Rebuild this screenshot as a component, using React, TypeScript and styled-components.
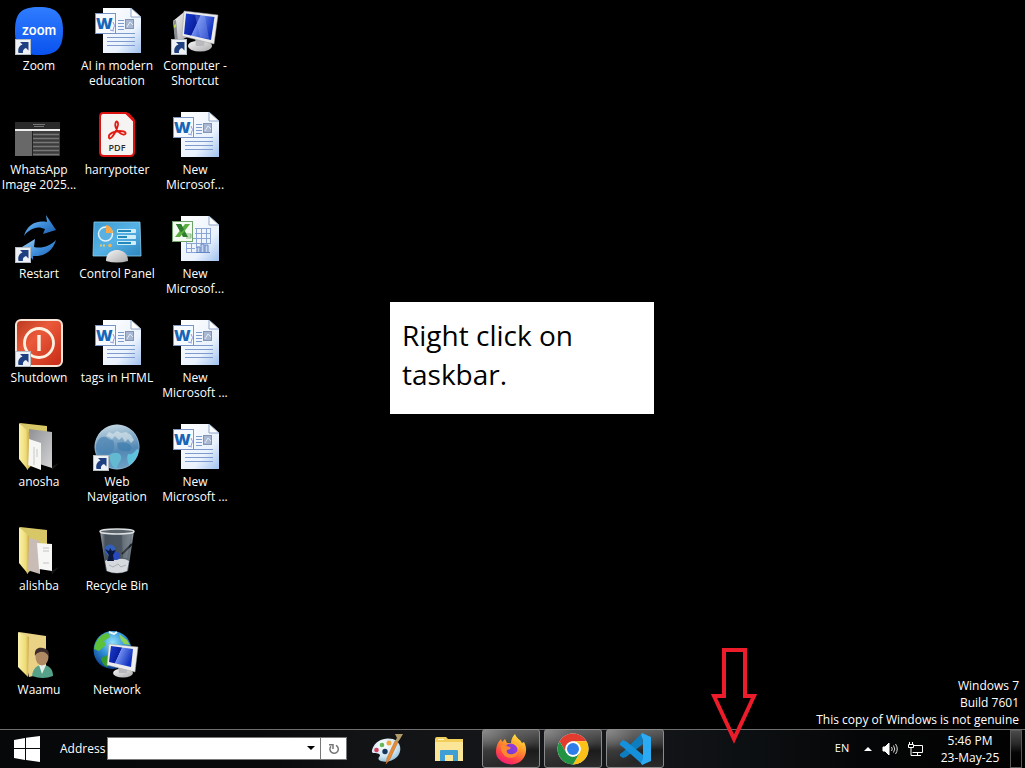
import React from "react";
import styled, { createGlobalStyle } from "styled-components";

const GlobalStyle = createGlobalStyle`
  * { box-sizing: border-box; }
  body {
    margin: 0;
    background: #000;
    color: #fff;
    font-family: "Open Sans", "Noto Sans", sans-serif;
    font-size: 12px;
  }
`;

const Screen = styled.div`
  position: relative;
  display: flex;
  flex-direction: column;
  min-height: 100vh;
  overflow: hidden;
`;

const Desktop = styled.main`
  position: relative;
  flex: 1;
`;

const IconGrid = styled.div`
  display: grid;
  grid-auto-flow: column;
  grid-template-rows: repeat(7, 104px);
  grid-auto-columns: 78px;
`;

const Shortcut = styled.a`
  display: flex;
  flex-direction: column;
  align-items: center;
  gap: 3px;
  padding-top: 7px;
  color: #fff;
  text-decoration: none;
`;

const ShortcutLabel = styled.span`
  font-size: 12px;
  line-height: 15px;
  text-align: center;
  white-space: pre;
`;

const Note = styled.p`
  position: absolute;
  left: 390px;
  top: 302px;
  width: 264px;
  height: 112px;
  margin: 0;
  padding: 14px 12px;
  background: #fff;
  color: #000;
  font-size: 28px;
  line-height: 39px;
`;

const Pointer = styled.svg`
  position: absolute;
  left: 711px;
  bottom: 24px;
  z-index: 2;
`;

const Watermark = styled.div`
  position: absolute;
  right: 6px;
  bottom: 1px;
  text-align: right;
  font-size: 12px;
  line-height: 17px;
`;

const Taskbar = styled.footer`
  display: flex;
  align-items: stretch;
  height: 39px;
  padding-right: 3px;
  border-top: 1px solid #6e6e6e;
  background: linear-gradient(90deg, #060809 0%, #08090a 25%, #121315 35%, #15171a 60%, #0c0f11 74%, #050607 84%, #020202 100%);
`;

const PlainButton = styled.button`
  display: flex;
  align-items: center;
  justify-content: center;
  padding: 0;
  border: 0;
  background: none;
  color: inherit;
  font: inherit;
`;

const StartButton = styled(PlainButton)`
  width: 54px;
`;

const AddressBar = styled.div`
  display: flex;
  align-items: center;
  gap: 2px;
  margin-left: 6px;
  padding-bottom: 2px;
`;

const AddressField = styled.div`
  display: flex;
  width: 240px;
  height: 23px;
  border: 1px solid #777;
  background: #fff;
`;

const AddressInput = styled.input`
  flex: 1;
  min-width: 0;
  padding: 0 4px;
  border: 0;
  outline: 0;
  background: #fff;
  font: inherit;
`;

const FieldButton = styled(PlainButton)<{ $divided?: boolean }>`
  width: ${(p) => (p.$divided ? 26 : 18)}px;
  border-left: ${(p) => (p.$divided ? "1px solid #777" : "0")};
`;

const AppStrip = styled.nav`
  display: flex;
  gap: 4px;
  margin-left: 11px;
`;

const AppButton = styled(PlainButton)<{ $open?: boolean }>`
  width: 58px;
  margin-top: ${(p) => (p.$open ? -1 : 0)}px;
  border: ${(p) => (p.$open ? "1px solid #8b8b8b" : "0")};
  border-radius: 3px;
  background: ${(p) =>
    p.$open
      ? "radial-gradient(ellipse at 0% 0%, #8a8a8a 0%, rgba(110,110,110,.45) 35%, transparent 70%), linear-gradient(180deg, #5c5c5c 0%, #3a3a3a 35%, #1b1b1b 55%, #2b2b2b 100%)"
      : "none"};
`;

const Tray = styled.div`
  display: flex;
  align-items: center;
  margin-left: auto;
`;

const Language = styled(PlainButton)`
  width: 20px;
  margin: 0 12px 4px 0;
  font-size: 11px;
`;

const TrayIcons = styled.div`
  display: flex;
  align-items: center;
  gap: 10px;
`;

const Clock = styled.time`
  width: 64px;
  margin: 0 8px 0 15px;
  text-align: center;
  font-size: 12px;
  line-height: 17px;
`;

const ShowDesktop = styled(PlainButton)`
  align-self: stretch;
  width: 12px;
  border: 1px solid #5a5a5a;
  background: linear-gradient(180deg, #4a4a4a 0%, #2a2a2a 35%, #050505 60%, #000 100%);
`;

const Defs = () => (
  <svg width="0" height="0" style={{ position: "absolute" }} aria-hidden="true">
    <defs>
      <linearGradient id="page" x1="0" y1="0" x2="1" y2="1">
        <stop offset="0" stopColor="#ffffff" />
        <stop offset=".65" stopColor="#eaf2fd" />
        <stop offset="1" stopColor="#9fc0ee" />
      </linearGradient>
      <linearGradient id="screen" x1="0" y1="0" x2="1" y2=".4">
        <stop offset="0" stopColor="#1c3fd0" />
        <stop offset=".48" stopColor="#0a1fa0" />
        <stop offset=".5" stopColor="#6f8dee" />
        <stop offset="1" stopColor="#1233c0" />
      </linearGradient>
      <linearGradient id="metal" x1="0" y1="0" x2="1" y2="1">
        <stop offset="0" stopColor="#f7f7f7" />
        <stop offset="1" stopColor="#a9a9ad" />
      </linearGradient>
      <linearGradient id="zoomBlue" x1="0" y1="0" x2="0" y2="1">
        <stop offset="0" stopColor="#2f7dff" />
        <stop offset="1" stopColor="#0a52ee" />
      </linearGradient>
      <linearGradient id="arrowBlue" x1="0" y1="0" x2="1" y2="1">
        <stop offset="0" stopColor="#a8d4f8" />
        <stop offset=".5" stopColor="#3f8fdc" />
        <stop offset="1" stopColor="#1858a8" />
      </linearGradient>
      <linearGradient id="red" x1="0" y1="0" x2="1" y2="1">
        <stop offset="0" stopColor="#b83a20" />
        <stop offset=".4" stopColor="#ea5a3a" />
        <stop offset="1" stopColor="#c62a16" />
      </linearGradient>
      <linearGradient id="folder" x1="0" y1="0" x2="1" y2="0">
        <stop offset="0" stopColor="#faf2a8" />
        <stop offset=".7" stopColor="#eedb78" />
        <stop offset="1" stopColor="#c9a94a" />
      </linearGradient>
      <linearGradient id="sheet" x1="0" y1="0" x2="1" y2="1">
        <stop offset="0" stopColor="#8e9094" />
        <stop offset="1" stopColor="#d4d4d6" />
      </linearGradient>
      <linearGradient id="panel" x1="0" y1="0" x2="1" y2="1">
        <stop offset="0" stopColor="#3c9ad2" />
        <stop offset=".5" stopColor="#56b2e4" />
        <stop offset="1" stopColor="#2d86c0" />
      </linearGradient>
      <linearGradient id="globe" x1=".4" y1="0" x2=".6" y2="1">
        <stop offset="0" stopColor="#c2d6e2" />
        <stop offset=".3" stopColor="#88aeca" />
        <stop offset=".6" stopColor="#5288b4" />
        <stop offset="1" stopColor="#6fa2c8" />
      </linearGradient>
      <radialGradient id="earth" cx=".5" cy=".3" r=".7">
        <stop offset="0" stopColor="#8fe0f8" />
        <stop offset=".5" stopColor="#2f8fd8" />
        <stop offset="1" stopColor="#0d3f8c" />
      </radialGradient>
      <linearGradient id="glass" x1="0" y1="0" x2="1" y2="0">
        <stop offset="0" stopColor="#aab2b8" />
        <stop offset=".15" stopColor="#4a555f" />
        <stop offset=".6" stopColor="#4c5864" />
        <stop offset=".9" stopColor="#707c86" />
        <stop offset="1" stopColor="#aab2b8" />
      </linearGradient>
      <linearGradient id="fox" x1=".8" y1="0" x2=".3" y2="1">
        <stop offset="0" stopColor="#fff04a" />
        <stop offset=".4" stopColor="#ff9a28" />
        <stop offset=".75" stopColor="#ff4448" />
        <stop offset="1" stopColor="#ee1c78" />
      </linearGradient>
      <linearGradient id="foxCore" x1="0" y1="1" x2="1" y2="0">
        <stop offset="0" stopColor="#5b3fd8" />
        <stop offset="1" stopColor="#a838d8" />
      </linearGradient>
      <radialGradient id="palette" cx=".4" cy=".3" r=".8">
        <stop offset="0" stopColor="#ffffff" />
        <stop offset=".6" stopColor="#cfe6f2" />
        <stop offset="1" stopColor="#7fb2d0" />
      </radialGradient>
    </defs>
  </svg>
);

const Icon = ({ children, size = 48, box = 48 }: { children: React.ReactNode; size?: number; box?: number }) => (
  <svg width={size} height={size} viewBox={`0 0 ${box} ${box}`} overflow="visible" aria-hidden="true">
    {children}
  </svg>
);

const LinkBadge = () => (
  <g>
    <rect x=".5" y="32.500" width="15" height="15" fill="#eef2f6" stroke="#b4bcc4" />
    <path d="M3.500 46C2.500 41.500 4.500 38.500 7.500 37.500L5 35H13.500V43.500L11 41C8.500 42 7.500 43.500 8 46Z" fill="#1f4080" />
  </g>
);

const Page = () => (
  <g>
    <path d="M10 1H38L48 10V46H10Z" fill="url(#page)" />
    <path d="M38 1V10H48Z" fill="#fff" stroke="#8ea6c8" strokeWidth="1" />
  </g>
);

const WordDoc = () => (
  <Icon>
    <Page />
    <path d="M25 13.500H31M25 16.500H31M25 19.500H31M25 22.500H31M14 26.500H42M14 30.500H42M14 34.500H42M14 38.500H42" stroke="#7d9bcd" />
    <rect x="32.500" y="12.500" width="8" height="9" fill="#a9b8d2" stroke="#8394b4" />
    <path d="M34 20L37 15 40 18" fill="none" stroke="#e4eaf4" />
    <rect x="2.500" y="6.500" width="20" height="20" fill="#f7faff" stroke="#7a94c4" />
    <path d="M20 15q3 3 0 8M17 23l4 1" stroke="#8d9be0" fill="none" />
    <text x="3" y="22" fontFamily="Open Sans, sans-serif" fontWeight="800" fontSize="16" fill="#1766b8">W</text>
  </Icon>
);

const ExcelDoc = () => (
  <Icon>
    <Page />
    <path d="M24 13.500H40M24 18.500H40M15 23.500H40M15 28.500H40M15 33.500H24M15 37.500H26M15.500 24V37M20.500 28V37M25.500 13V33M30.500 13V28M35.500 13V28M39.500 13V28" stroke="#8ba6d4" fill="none" />
    <path d="M26 37V32H29V37M30 37V29H33V37M34 37V30H37V37M25 37.500H39" fill="#c5d6f2" stroke="#6486c2" />
    <rect x="1.500" y="6.500" width="20" height="20" fill="#f4fbf2" stroke="#6fa468" />
    <path d="M15 19h5v4h-5M15 21h5" stroke="#80b678" fill="none" />
    <path d="M5 9H10L17 22H12Z" fill="#2f7d2e" />
    <path d="M14 9H19L9 22H4Z" fill="#5aae3e" />
    <path d="M5 9H10L13 14.500 10 17.500Z" fill="#2f7d2e" />
  </Icon>
);

const ZoomApp = () => (
  <Icon>
    <path d="M24 0C42 0 48 7 48 24S42 48 24 48 0 42 0 24 6 0 24 0Z" fill="url(#zoomBlue)" />
    <text x="24" y="28" textAnchor="middle" fontFamily="Inter, sans-serif" fontWeight="600" fontSize="13" fill="#fff">zoom</text>
    <LinkBadge />
  </Icon>
);

const ComputerShortcut = () => (
  <Icon>
    <path d="M2 14L13 5 16 30 5 36Z" fill="url(#metal)" />
    <path d="M2 14L5 13 7 34 4 35Z" fill="#8a8e90" />
    <path d="M3 18l2-1v3l-2 1z" fill="#b7d84c" />
    <ellipse cx="29" cy="39" rx="12" ry="5.500" fill="url(#metal)" />
    <path d="M24 30L34 33 33 39H25Z" fill="#b9babd" />
    <path d="M13 4L47 8 43 37 11 29Z" fill="#ececec" stroke="#9c9c9c" strokeWidth=".5" />
    <path d="M15 6.500L43.500 10 40 33 13 27Z" fill="url(#screen)" />
    <path d="M24 8L34 9 38 32 29 30Z" fill="#8ca4f4" opacity=".35" />
    <LinkBadge />
  </Icon>
);

const Screenshot = () => (
  <Icon>
    <g transform="translate(0 -4)">
      <rect y="15" width="45" height="34" fill="#3c3c3c" />
      <rect y="15" width="45" height="7" fill="#2a2a2a" />
      <path d="M18 17.500H30M19 19.500H29" stroke="#777" />
      <rect y="22" width="45" height="2" fill="#eee" />
      <rect y="24" width="17" height="25" fill="#686868" />
      <path d="M18 27.500H44M18 31.500H44M18 35.500H44M18 39.500H44M18 43.500H44M18 47.500H44" stroke="#777" strokeWidth="1.500" />
      <path d="M17.500 24V49" stroke="#222" />
    </g>
  </Icon>
);

const PdfFile = () => (
  <Icon>
    <path d="M10 2H33L41 10V41Q41 45 37 45H11Q7 45 7 41V6Q7 2 10 2Z" fill="#f6f4f3" stroke="#d9130f" strokeWidth="2" />
    <path d="M32 1.500L41.500 11V8L36 2Z" fill="#d9130f" />
    <path d="M16 26C15 23 21 20 27 20S34 23 31 23.500C27 24 21 17 22.500 12C23.500 9 25.500 11 25 14C24 19 19 28 16.500 27.500Q15.500 27 16 26Z" fill="none" stroke="#e21b12" strokeWidth="1.800" />
    <text x="24" y="40" textAnchor="middle" fontFamily="Open Sans, sans-serif" fontWeight="600" fontSize="9" fill="#2c2c2c">PDF</text>
  </Icon>
);

const Restart = () => (
  <Icon>
    <path d="M9 21C12 10 21 5 32 7L31 0 41 15 28 19 30 14C22 10 14 14 9 21Z" fill="url(#arrowBlue)" />
    <path d="M41 25C38 36 29 42 18 41L18 45 7 32 20 24 19 32C27 34 35 31 41 25Z" fill="url(#arrowBlue)" />
    <LinkBadge />
  </Icon>
);

const ControlPanel = () => (
  <Icon>
    <path d="M1 7H47L48 41H0Z" fill="url(#panel)" stroke="#8dd0f0" strokeWidth=".8" />
    <circle cx="12.500" cy="19" r="7" fill="#5ab0e0" stroke="#e2f3fb" strokeWidth="1.500" />
    <path d="M13 18V10A8 8 0 0 1 20 18Z" fill="#f5a94c" />
    <path d="M7 30.500H13" stroke="#e7c964" strokeWidth="2" strokeDasharray="2 1" />
    <circle cx="17" cy="30.500" r="1.800" fill="#f2b354" />
    <g fill="#cfeefa">
      <rect x="24" y="14" width="19" height="4" rx="1" />
      <rect x="24" y="20" width="19" height="4" rx="1" />
      <rect x="24" y="26" width="19" height="4" rx="1" />
    </g>
    <path d="M25 16H38M25 22H34M25 28H38" stroke="#2388bc" strokeWidth="2" />
    <path d="M13 46C13 37 20 35 24 35S35 37 35 46Q24 49 13 46Z" fill="url(#metal)" />
  </Icon>
);

const Shutdown = () => (
  <Icon>
    <rect x="1" y="1" width="46" height="46" rx="5" fill="url(#red)" stroke="#f8e6d8" strokeWidth="2" />
    <circle cx="24" cy="24" r="14.500" fill="none" stroke="#fff1e2" strokeWidth="2.800" />
    <rect x="22.300" y="16" width="3.400" height="16" fill="#fff1e2" />
    <LinkBadge />
  </Icon>
);

const FolderOpen = ({ swapped }: { swapped?: boolean }) => (
  <Icon>
    <path d="M36 44L44 40 37 47Z" fill="#181818" />
    <path d="M5 0L32 3V26L12 47Z" fill="#d8c766" />
    {swapped ? (
      <g>
        <path d="M12 10L25 14V47L12 43Z" fill="#c9bcb6" />
        <path d="M22 16L37 17V44L24 42Z" fill="#f7f7f5" />
        <path d="M28 21h6M28 24h6M28 36h6" stroke="#c2c2c2" />
      </g>
    ) : (
      <g>
        <path d="M14 6L37 9V45L15 38Z" fill="url(#sheet)" />
        <path d="M14 16L26 20V47L13 42Z" fill="#f6f6f4" />
        <path d="M19 24v18M22 26v8" stroke="#c8c8c8" />
      </g>
    )}
    <path d="M4 0L14 9 13 47 4 36Z" fill="url(#folder)" />
  </Icon>
);

const UserFolder = () => (
  <Icon>
    <path d="M4 1L31 5V42L14 46Z" fill="#e9d285" />
    <path d="M3 1L14 6 13 46 3 36Z" fill="url(#folder)" />
    <path d="M17 45C18 37 22 34 28 34S38 38 38 45Q28 49 17 45Z" fill="#55a18a" />
    <path d="M24 34L27 43 31 34Z" fill="#e4efe9" />
    <ellipse cx="27" cy="26" rx="6.500" ry="8.500" fill="#b08a62" />
    <path d="M20 25C19 17 24 16 28 17Q35 18 34 26Q31 20 25 21Q21 22 20 25Z" fill="#3b2b2a" />
  </Icon>
);

const WebGlobe = () => (
  <Icon>
    <circle cx="24" cy="24" r="22.500" fill="url(#globe)" />
    <path d="M13 13L16 9 20 11 24 8 28 10 33 9 38 12 41 17 38 20 35 16 32 19 29 14 26 17 22 13 19 16 16 14Z" fill="#e0e9ec" opacity=".6" />
    <path d="M3 22Q6 12 13 14Q17 18 20 17Q24 26 17 30Q8 33 3 27Z" fill="#4a82b0" opacity=".7" />
    <path d="M24 20Q32 18 36 21Q40 24 37 28Q30 29 25 26Z" fill="#3f7cae" opacity=".7" />
    <path d="M16 32Q22 28 27 31Q30 35 26 40L23 46Q17 43 16 32Z" fill="#63b8d2" />
    <path d="M35 31Q40 32 43 27Q46 24 45 30Q42 39 36 42Q33 36 35 31Z" fill="#5fc2dc" />
    <circle cx="24" cy="24" r="22" fill="none" stroke="#b9d4e4" opacity=".35" />
    <LinkBadge />
  </Icon>
);

const RecycleBin = () => (
  <Icon>
    <path d="M7 4L13 44Q24 49 35 44L41 4Z" fill="url(#glass)" opacity=".95" />
    <path d="M12 34Q15 31 22 33Q30 30 36 34L34 44Q24 48 14 44Z" fill="#d6dade" />
    <path d="M16 38l4 2 5-3 3 3 5-2" stroke="#a8b0b6" fill="none" />
    <circle cx="17" cy="23" r="5.500" fill="#2f62cc" opacity=".85" />
    <circle cx="23" cy="29" r="4" fill="#2448c8" opacity=".9" />
    <path d="M12 22L16 24 17 21 19 24 23 23 20 28 21 34H14L16 28Z" fill="#0a173c" />
    <path d="M29 27L39 17" stroke="#1c2228" strokeWidth="2" />
    <path d="M29 7L38 7 34 31 30 31Z" fill="#fff" opacity=".12" />
    <ellipse cx="24" cy="4.500" rx="17" ry="2.500" fill="#5b646b" stroke="#dce0e2" strokeWidth="1.500" />
  </Icon>
);

const NetworkGlobe = () => (
  <Icon>
    <circle cx="19.500" cy="19" r="19" fill="url(#earth)" />
    <path d="M1 18C2 9 9 2 15 2L17 6 11 10 13 14 6 20Z" fill="#5cc23a" />
    <path d="M8 27L15 24 18 31 14 36Q9 34 8 27Z" fill="#359a2c" />
    <path d="M26 3L34 9 37 14 31 13 28 9Z" fill="#8ed454" />
    <path d="M16 1l5 2 3-2" stroke="#e8f8f8" strokeWidth="2" fill="none" />
    <ellipse cx="30" cy="42" rx="10" ry="4.500" fill="url(#metal)" />
    <path d="M25 35L34 37V42H26Z" fill="#b8b8bc" />
    <path d="M16 13L45 16 42 41 14 34Z" fill="#eee" stroke="#a0a0a0" strokeWidth=".5" />
    <path d="M18 15L40 18 38 36 16 31Z" fill="url(#screen)" />
  </Icon>
);

const WindowsLogo = () => (
  <svg width="26" height="26" viewBox="0 0 26 26" aria-hidden="true">
    <path d="M0 4L11 2V12H0ZM12 1.800L26 0V12H12ZM0 13H11V24L0 22ZM12 13H26V26L12 24Z" fill="#fff" />
  </svg>
);

const PaintIcon = () => (
  <Icon size={32} box={32}>
    <path d="M1 17C4 7 14 4 22 6C31 9 31 19 26 24C21 29 12 30 8 27C6 24 11 23 8 21C5 19 0 22 1 17Z" fill="url(#palette)" />
    <circle cx="5.500" cy="17" r="2.300" fill="#d7415c" />
    <circle cx="11" cy="12" r="2.300" fill="#68b85a" />
    <circle cx="18" cy="10" r="2.500" fill="#f2a640" />
    <circle cx="14" cy="18.500" r="2.700" fill="#16365e" />
    <path d="M15 31L16 25 24 8 27 9 19 26Z" fill="#e58c36" stroke="#b9642a" strokeWidth=".5" />
    <path d="M24 8L26 5 24 1 32 1 29 6 27 9Z" fill="#b09a68" />
  </Icon>
);

const ExplorerIcon = () => (
  <Icon size={28} box={28}>
    <path d="M0 4Q0 2 2 2H11L13 4H28V26H0Z" fill="#f1cf5a" />
    <path d="M0 7H28V26H0Z" fill="#fbe596" />
    <path d="M3 4.500H9" stroke="#fff7cc" />
    <path d="M5 16Q5 15 6 15H22Q23 15 23 16V26H18V20H10V26H5Z" fill="#3f9fd4" />
  </Icon>
);

const FirefoxIcon = () => (
  <Icon size={32} box={32}>
    <path d="M1 18C1 13 3 9 6 6L7 9 10 6 12 10H16C16 6 18 3 20 1C22 6 25 6 27 10L29 9C33 16 31 24 26 28C20 33 11 32 6 28C2 25 1 22 1 18Z" fill="url(#fox)" />
    <circle cx="16" cy="17" r="6.500" fill="url(#foxCore)" />
    <path d="M6 12C10 11 11 14 15 14C17 15 14 17 12 17C10 22 20 23 23 17C24 26 12 27 8 21Q5 17 6 12Z" fill="#ff8730" />
    <path d="M16 10C22 9 26 14 23 20C25 16 22 12 16 10Z" fill="#ffb72c" />
  </Icon>
);

const ChromeIcon = () => (
  <Icon size={32} box={32}>
    <circle cx="16" cy="16" r="15.500" fill="#fff" />
    <path d="M2.580 8.250A15.500 15.500 0 0 1 29.420 8.250H16A7.750 7.750 0 0 0 9.290 19.870Z" fill="#e33b2e" />
    <path d="M29.420 8.250A15.500 15.500 0 0 1 16 31.500L22.710 19.870A7.750 7.750 0 0 0 16 8.250Z" fill="#fbc116" />
    <path d="M2.580 8.250A15.500 15.500 0 0 0 16 31.500L22.710 19.870A7.750 7.750 0 0 1 9.290 19.870Z" fill="#229342" />
    <circle cx="16" cy="16" r="7.500" fill="#fff" />
    <circle cx="16" cy="16" r="6" fill="#2f7de8" />
  </Icon>
);

const CodeIcon = () => (
  <Icon size={32} box={32}>
    <path d="M23 0L5 18 1 21V23L4 25 7 24 24 11Z" fill="#0d7dc0" />
    <path d="M1 10L4 7 8 9 24 22V32L5 15 1 12Z" fill="#1591dc" />
    <path d="M23 0L32 4V28L23 32 22 30 24 26V7L22 2Z" fill="#2cabf2" />
  </Icon>
);

const shortcuts: { label: string; icon: React.ReactNode }[] = [
  { label: "Zoom", icon: <ZoomApp /> },
  { label: "WhatsApp\nImage 2025...", icon: <Screenshot /> },
  { label: "Restart", icon: <Restart /> },
  { label: "Shutdown", icon: <Shutdown /> },
  { label: "anosha", icon: <FolderOpen /> },
  { label: "alishba", icon: <FolderOpen swapped /> },
  { label: "Waamu", icon: <UserFolder /> },
  { label: "AI in modern\neducation", icon: <WordDoc /> },
  { label: "harrypotter", icon: <PdfFile /> },
  { label: "Control Panel", icon: <ControlPanel /> },
  { label: "tags in HTML", icon: <WordDoc /> },
  { label: "Web\nNavigation", icon: <WebGlobe /> },
  { label: "Recycle Bin", icon: <RecycleBin /> },
  { label: "Network", icon: <NetworkGlobe /> },
  { label: "Computer -\nShortcut", icon: <ComputerShortcut /> },
  { label: "New\nMicrosof...", icon: <WordDoc /> },
  { label: "New\nMicrosof...", icon: <ExcelDoc /> },
  { label: "New\nMicrosoft ...", icon: <WordDoc /> },
  { label: "New\nMicrosoft ...", icon: <WordDoc /> },
];

export default function App() {
  return (
    <Screen>
      <GlobalStyle />
      <Defs />
      <Desktop>
        <IconGrid>
          {shortcuts.map((s, i) => (
            <Shortcut href="#" key={i}>
              {s.icon}
              <ShortcutLabel>{s.label}</ShortcutLabel>
            </Shortcut>
          ))}
        </IconGrid>
        <Note>Right click on taskbar.</Note>
        <Watermark>
          <div>Windows 7</div>
          <div>Build 7601</div>
          <div>This copy of Windows is not genuine</div>
        </Watermark>
      </Desktop>
      <Pointer width="48" height="98" viewBox="0 0 48 98" aria-hidden="true">
        <path d="M13 4H34V50H43L23 93 3 50H13Z" fill="none" stroke="#ed1c2b" strokeWidth="4" />
      </Pointer>
      <Taskbar>
        <StartButton aria-label="Start">
          <WindowsLogo />
        </StartButton>
        <AddressBar>
          <label htmlFor="address">Address</label>
          <AddressField>
            <AddressInput id="address" type="text" />
            <FieldButton aria-label="Show addresses">
              <svg width="8" height="4" viewBox="0 0 8 4"><path d="M0 0H8L4 4Z" fill="#000" /></svg>
            </FieldButton>
            <FieldButton $divided aria-label="Refresh">
              <svg width="12" height="13" viewBox="0 0 12 13" fill="none" stroke="#777" strokeWidth="1.500">
                <path d="M8 3.300A4.200 4.200 0 1 1 3 4.200M1 2.700H5V7" />
              </svg>
            </FieldButton>
          </AddressField>
        </AddressBar>
        <AppStrip aria-label="Applications">
          <AppButton aria-label="Paint"><PaintIcon /></AppButton>
          <AppButton aria-label="Explorer"><ExplorerIcon /></AppButton>
          <AppButton $open aria-label="Firefox"><FirefoxIcon /></AppButton>
          <AppButton $open aria-label="Chrome"><ChromeIcon /></AppButton>
          <AppButton $open aria-label="Code"><CodeIcon /></AppButton>
        </AppStrip>
        <Tray>
          <Language>EN</Language>
          <TrayIcons>
            <PlainButton aria-label="Show hidden icons">
              <svg width="8" height="4" viewBox="0 0 8 4"><path d="M0 4H8L4 0Z" fill="#fff" /></svg>
            </PlainButton>
            <PlainButton aria-label="Volume">
              <svg width="16" height="14" viewBox="0 0 16 14" fill="none" stroke="#ddd">
                <path d="M1 5H3L7 1V13L3 9H1Z" fill="#fff" stroke="#fff" />
                <path d="M9.500 5Q11 7 9.500 9M11.500 3.500Q14 7 11.500 10.500M13.500 2Q17 7 13.500 12" />
              </svg>
            </PlainButton>
            <PlainButton aria-label="Network">
              <svg width="15" height="15" viewBox="0 0 15 15" fill="none" stroke="#fff">
                <path d="M5 3.500H14.500V10.500H4.500M9.500 11V13M6 13.500H13" />
                <path d="M1.500 0V3M4.500 0V3M.500 2.500H5.500V5.500H.500ZM3 6V13.500H7" />
              </svg>
            </PlainButton>
          </TrayIcons>
          <Clock>
            <div>5:46 PM</div>
            <div>23-May-25</div>
          </Clock>
          <ShowDesktop aria-label="Show desktop" />
        </Tray>
      </Taskbar>
    </Screen>
  );
}
